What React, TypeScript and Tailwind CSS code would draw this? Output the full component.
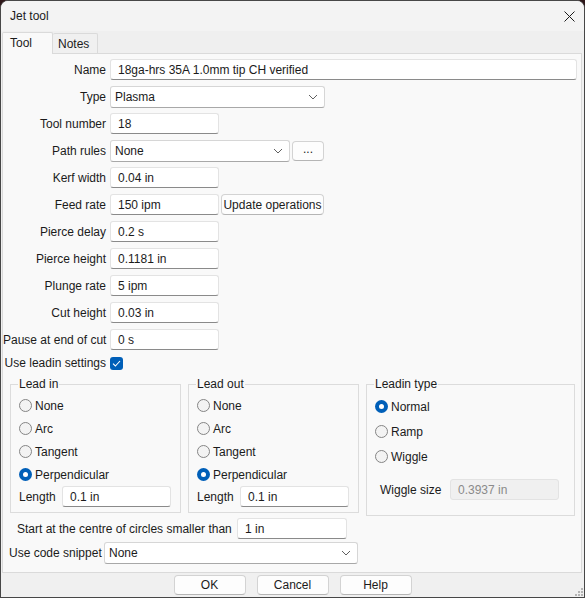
import * as React from "react";

type InputProps = {
  value: string;
  width: string;
  disabled?: boolean;
};

function TextBox({ value, width, disabled }: InputProps) {
  return (
    <div
      className={`flex h-[21px] shrink-0 items-center rounded-[3px] border border-[#e3e3e3] pl-[7px] ${width} ${
        disabled
          ? "border-b-[#e3e3e3] bg-[#f0f0f0] text-[#8a8a8a]"
          : "border-b-[#8a8a8a] bg-white text-[#1b1b1b]"
      }`}
    >
      {value}
    </div>
  );
}

function Chevron() {
  return (
    <svg width="10" height="6" viewBox="0 0 10 6" className="shrink-0">
      <path d="M1 1 L5 5 L9 1" fill="none" stroke="#606060" strokeWidth="1" />
    </svg>
  );
}

function ComboBox({ value, width }: { value: string; width: string }) {
  return (
    <div
      className={`flex h-[22px] shrink-0 items-center justify-between rounded-[3px] border border-[#d6d6d6] border-b-[#a8a8a8] bg-white pl-[4px] pr-[6px] text-[#1b1b1b] ${width}`}
    >
      <span>{value}</span>
      <Chevron />
    </div>
  );
}

function PushButton({
  children,
  className,
}: {
  children: React.ReactNode;
  className: string;
}) {
  return (
    <button
      type="button"
      className={`flex shrink-0 items-center justify-center rounded-[4px] border border-[#d3d3d3] border-b-[#b5b5b5] bg-[#fdfdfd] text-[#1b1b1b] ${className}`}
    >
      {children}
    </button>
  );
}

function Radio({ label, checked }: { label: string; checked?: boolean }) {
  return (
    <div className="flex items-center gap-[3px]">
      {checked ? (
        <span className="flex h-[13px] w-[13px] items-center justify-center rounded-full bg-[#005fb8]">
          <span className="h-[5px] w-[5px] rounded-full bg-white" />
        </span>
      ) : (
        <span className="h-[13px] w-[13px] rounded-full border border-[#858585] bg-[#f3f3f3]" />
      )}
      <span>{label}</span>
    </div>
  );
}

type FieldRowProps = {
  label: string;
  children: React.ReactNode;
};

function FieldRow({ label, children }: FieldRowProps) {
  return (
    <div className="flex h-[27px] items-center">
      <span className="w-[103px] shrink-0 whitespace-nowrap text-right">
        {label}
      </span>
      <div className="ml-[4px] flex items-center gap-[2px]">{children}</div>
    </div>
  );
}

const fields: [string, string][] = [
  ["Kerf width", "0.04 in"],
  ["Feed rate", "150 ipm"],
  ["Pierce delay", "0.2 s"],
  ["Pierce height", "0.1181 in"],
  ["Plunge rate", "5 ipm"],
  ["Cut height", "0.03 in"],
  ["Pause at end of cut", "0 s"],
];

function LeadGroup({ title }: { title: string }) {
  return (
    <fieldset className="w-[171px] shrink-0 border border-[#dcdcdc] pb-[5px] pl-[8px]">
      <legend className="ml-[-1px] px-[1px] leading-[16px]">{title}</legend>
      <div className="flex flex-col pt-[2px]">
        {["None", "Arc", "Tangent"].map((item) => (
          <div key={item} className="flex h-[23px] items-center">
            <Radio label={item} />
          </div>
        ))}
        <div className="flex h-[23px] items-center">
          <Radio label="Perpendicular" checked />
        </div>
        <div className="flex h-[21px] items-center">
          <span className="w-[43px] shrink-0">Length</span>
          <TextBox value="0.1 in" width="w-[109px]" />
        </div>
      </div>
    </fieldset>
  );
}

export default function App() {
  return (
    <div
      className="h-[598px] w-[585px] bg-[#2d1618] text-[12px] leading-[16px] text-[#1b1b1b]"
      style={{ fontFamily: '"Segoe UI", "Liberation Sans", Arial, sans-serif' }}
    >
      <div className="relative flex h-full flex-col overflow-hidden rounded-t-[8px] border border-[#474747] bg-[#f0f0f0]">
        {/* title bar */}
        <div className="flex h-[30px] shrink-0 items-center justify-between bg-[#f3f3f3] pl-[9px] pr-[9px]">
          <span className="text-[12px]">Jet tool</span>
          <svg width="11" height="11" viewBox="0 0 11 11">
            <path
              d="M0.5 0.5 L10.5 10.5 M10.5 0.5 L0.5 10.5"
              stroke="#1b1b1b"
              strokeWidth="1"
            />
          </svg>
        </div>

        {/* tabs */}
        <div className="flex h-[22px] shrink-0 items-end bg-[#efefef] pl-[1px]">
          <div className="relative z-10 mb-[-1px] flex h-[22px] w-[51px] items-start rounded-t-[2px] border border-b-0 border-[#dadada] bg-[#f9f9f9] pl-[7px] pt-[2px]">
            Tool
          </div>
          <div className="flex h-[20px] w-[45px] items-center rounded-t-[2px] border border-l-0 border-b-0 border-[#dadada] bg-[#f0f0f0] pl-[5px] pt-[1px]">
            Notes
          </div>
        </div>

        {/* panel */}
        <div className="ml-[1px] mr-[2px] flex h-[520px] shrink-0 flex-col border border-[#dadada] bg-[#f9f9f9] pt-[2px]">
          <FieldRow label="Name">
            <TextBox value="18ga-hrs 35A 1.0mm tip CH verified" width="w-[467px]" />
          </FieldRow>
          <FieldRow label="Type">
            <ComboBox value="Plasma" width="w-[215px]" />
          </FieldRow>
          <FieldRow label="Tool number">
            <TextBox value="18" width="w-[109px]" />
          </FieldRow>
          <FieldRow label="Path rules">
            <ComboBox value="None" width="w-[180px]" />
            <PushButton className="h-[20px] w-[32px] pb-[4px]">...</PushButton>
          </FieldRow>
          {fields.map(([label, value]) => (
            <FieldRow key={label} label={label}>
              <TextBox value={value} width="w-[109px]" />
              {label === "Feed rate" ? (
                <PushButton className="h-[21px] w-[103px]">Update operations</PushButton>
              ) : null}
            </FieldRow>
          ))}
          <div className="flex h-[20px] items-center">
            <span className="w-[103px] shrink-0 whitespace-nowrap text-right">
              Use leadin settings
            </span>
            <span className="ml-[4px] flex h-[13px] w-[13px] items-center justify-center rounded-[3px] bg-[#005fb8]">
              <svg width="9" height="7" viewBox="0 0 9 7">
                <path d="M1 3.6 L3.4 6 L8 1" fill="none" stroke="white" strokeWidth="1.1" />
              </svg>
            </span>
          </div>

          {/* group boxes */}
          <div className="mt-[3px] flex items-start pl-[7px]">
            <LeadGroup title="Lead in" />
            <div className="ml-[7px]">
              <LeadGroup title="Lead out" />
            </div>
            <fieldset className="ml-[7px] w-[209px] shrink-0 border border-[#dcdcdc] pb-[15px] pl-[8px]">
              <legend className="ml-[-1px] px-[1px] leading-[16px]">Leadin type</legend>
              <div className="flex flex-col pt-[2px]">
                <div className="flex h-[25px] items-center">
                  <Radio label="Normal" checked />
                </div>
                <div className="flex h-[25px] items-center">
                  <Radio label="Ramp" />
                </div>
                <div className="flex h-[25px] items-center">
                  <Radio label="Wiggle" />
                </div>
                <div className="mt-[10px] flex h-[21px] items-center pl-[5px]">
                  <span className="w-[70px] shrink-0">Wiggle size</span>
                  <TextBox value="0.3937 in" width="w-[109px]" disabled />
                </div>
              </div>
            </fieldset>
          </div>

          <div className="mt-[2px] flex h-[21px] items-center pl-[14px]">
            <span className="w-[220px] shrink-0 whitespace-nowrap">
              Start at the centre of circles smaller than
            </span>
            <TextBox value="1 in" width="w-[110px]" />
          </div>
          <div className="mt-[3px] flex h-[22px] items-center pl-[6px]">
            <span className="w-[95px] shrink-0 whitespace-nowrap">Use code snippet</span>
            <ComboBox value="None" width="w-[254px]" />
          </div>
        </div>

        {/* buttons */}
        <div className="flex h-[24px] shrink-0 items-center justify-center gap-[11px]">
          <PushButton className="h-[20px] w-[72px]">OK</PushButton>
          <PushButton className="h-[20px] w-[72px]">Cancel</PushButton>
          <PushButton className="h-[20px] w-[72px]">Help</PushButton>
        </div>

        {/* resize grip */}
        <svg
          width="8"
          height="8"
          viewBox="0 0 8 8"
          className="absolute bottom-[1px] right-[1px]"
        >
          <rect x="6" y="0" width="2" height="2" fill="#b4b4b4" />
          <rect x="3" y="3" width="2" height="2" fill="#b4b4b4" />
          <rect x="6" y="3" width="2" height="2" fill="#b4b4b4" />
          <rect x="0" y="6" width="2" height="2" fill="#b4b4b4" />
          <rect x="3" y="6" width="2" height="2" fill="#b4b4b4" />
          <rect x="6" y="6" width="2" height="2" fill="#b4b4b4" />
        </svg>
      </div>
    </div>
  );
}
